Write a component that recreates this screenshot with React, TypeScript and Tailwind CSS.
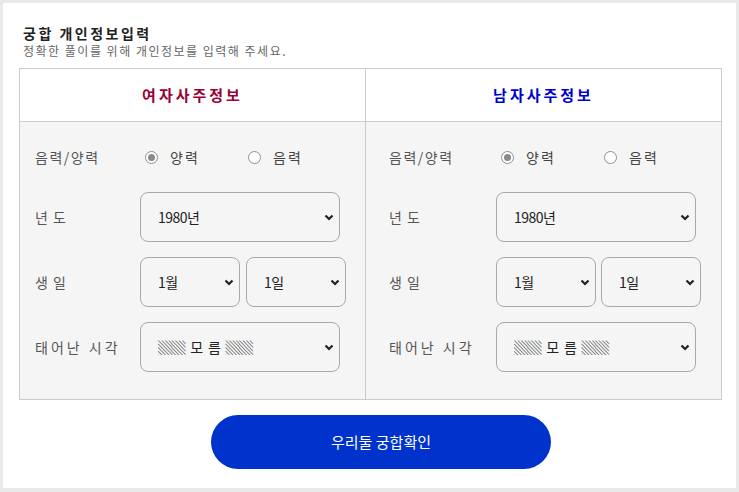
import React from 'react'

const font = { fontFamily: '"Noto Sans CJK KR", "Noto Sans", sans-serif' }

function Chevron() {
  return (
    <svg className="absolute right-[6px] top-1/2 -translate-y-1/2 h-[10px] w-[10px] pointer-events-none" viewBox="0 0 10 10" fill="none" stroke="#222" strokeWidth={2.2}>
      <path d="M1.5 3.5 L5 7 L8.5 3.5" />
    </svg>
  )
}

function Select({ width, value }: { width: string; value: string }) {
  return (
    <div className={`relative h-[50px] ${width}`}>
      <select
        defaultValue={value}
        className="appearance-none w-full h-full rounded-[8px] border border-[#a9a9a9] bg-[#f5f5f5] pl-[17px] pr-[24px] text-[14px] text-[#222] tracking-[-0.5px] outline-none whitespace-pre"
        style={font}
      >
        <option>{value}</option>
      </select>
      <Chevron />
    </div>
  )
}

function Radio({ checked, label }: { checked?: boolean; label: string }) {
  return (
    <div className="flex items-center gap-[12px] ml-[5px]">
      <span className="w-[13px] h-[13px] rounded-full border border-[#8f8f8f] bg-white flex items-center justify-center">
        {checked && <span className="w-[7px] h-[7px] rounded-full bg-[#8a8a8a]" />}
      </span>
      <span className="text-[14px] text-[#444] tracking-[2px]">{label}</span>
    </div>
  )
}

function Column({ pl, label, gap }: { pl: string; label: string; gap: string }) {
  return (
    <div className={`flex flex-col gap-[15px] pt-[15px] pb-[27px] ${pl}`}>
      <div className="flex items-center h-[40px]">
        <div className={`${label} text-[14px] text-[#555] tracking-[1.5px]`}>음력/양력</div>
        <div className="w-[103px]">
          <Radio checked label="양력" />
        </div>
        <Radio label="음력" />
      </div>
      <div className="flex items-center">
        <div className={`${label} text-[14px] text-[#555] tracking-[5px]`}>년도</div>
        <Select width="w-[200px]" value="1980년" />
      </div>
      <div className="flex items-center">
        <div className={`${label} text-[14px] text-[#555] tracking-[5px]`}>생일</div>
        <div className={`flex ${gap}`}>
          <Select width="w-[100px]" value="1월" />
          <Select width="w-[100px]" value="1일" />
        </div>
      </div>
      <div className="flex items-center">
        <div className={`${label} text-[14px] text-[#555] tracking-[3px]`}>태어난 시각</div>
        <Select width="w-[200px]" value={'▒▒\u00a0\u00a0모\u00a0\u00a0름\u00a0\u00a0▒▒'} />
      </div>
    </div>
  )
}

export default function App() {
  return (
    <div className="w-[739px] h-[492px] bg-[#e9e9e9] pt-[3px] pl-[3px]" style={font}>
      <div className="w-[733px] h-[485px] bg-white pt-[21px] px-[16px]">
        <div className="pl-[4px]">
          <h1 className="text-[14px] font-bold text-[#222] leading-[19px] tracking-[2.5px]">궁합 개인정보입력</h1>
          <p className="text-[12px] text-[#666] leading-[15px] tracking-[1.5px]">정확한 풀이를 위해 개인정보를 입력해 주세요.</p>
        </div>

        <div className="mt-[10px] w-[703px] border border-[#cccccc] grid grid-cols-[346px_355px]">
          <div className="h-[53px] border-b border-r border-[#cccccc] flex items-center justify-center text-[15px] font-bold text-[#990033] tracking-[3px]">
            여자사주정보
          </div>
          <div className="h-[53px] border-b border-[#cccccc] flex items-center justify-center text-[15px] font-bold text-[#0000cc] tracking-[3px]">
            남자사주정보
          </div>
          <div className="bg-[#f5f5f5] border-r border-[#cccccc]">
            <Column pl="pl-[15px]" label="w-[105px]" gap="gap-[6px]" />
          </div>
          <div className="bg-[#f5f5f5]">
            <Column pl="pl-[23px]" label="w-[107px]" gap="gap-[5px]" />
          </div>
        </div>

        <div className="flex pt-[15px] pl-[192px]">
          <button className="w-[340px] h-[54px] rounded-full bg-[#0033cc] text-white text-[15px]" style={font}>
            우리둘 궁합확인
          </button>
        </div>
      </div>
    </div>
  )
}
